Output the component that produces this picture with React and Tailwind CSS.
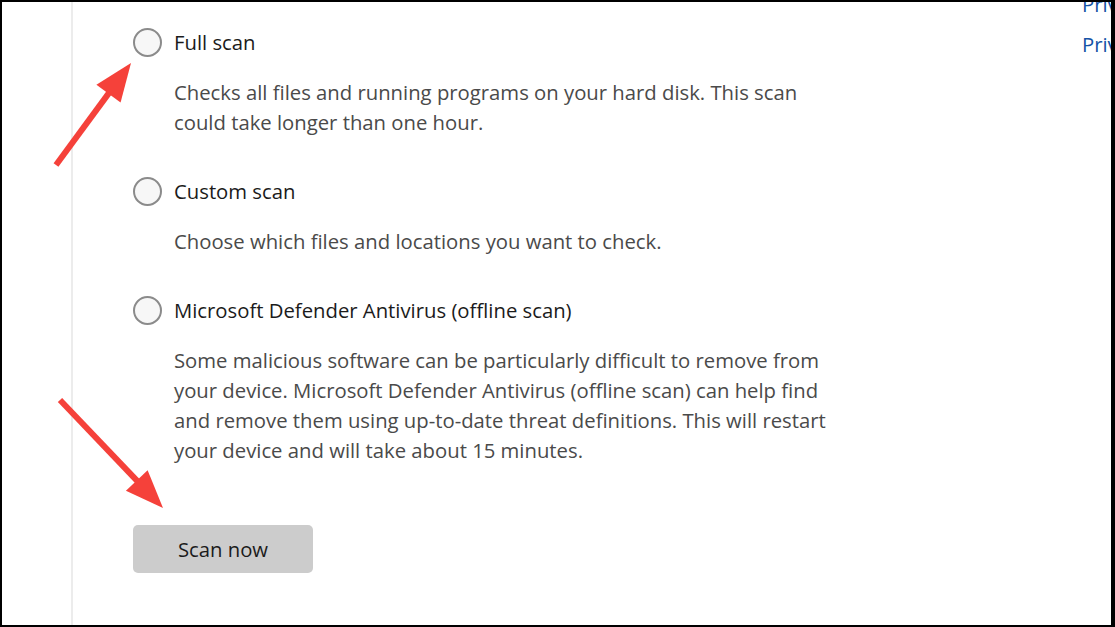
const options = [
  {
    title: "Full scan",
    desc: "Checks all files and running programs on your hard disk. This scan could take longer than one hour."
  },
  {
    title: "Custom scan",
    desc: "Choose which files and locations you want to check."
  },
  {
    title: "Microsoft Defender Antivirus (offline scan)",
    desc: "Some malicious software can be particularly difficult to remove from your device. Microsoft Defender Antivirus (offline scan) can help find and remove them using up-to-date threat definitions. This will restart your device and will take about 15 minutes."
  }
];

const Arrow = ({ x1, y1, x2, y2 }) => {
  // shaft stops short of the tip, head drawn as a triangle
  const dx = x2 - x1;
  const dy = y2 - y1;
  const len = Math.sqrt(dx * dx + dy * dy);
  const ux = dx / len;
  const uy = dy / len;
  const headLen = 38;
  const headW = 15;
  const bx = x2 - ux * headLen;
  const by = y2 - uy * headLen;
  const pts = `${x2},${y2} ${bx - uy * headW},${by + ux * headW} ${bx + uy * headW},${by - ux * headW}`;
  return (
    <g>
      <line x1={x1} y1={y1} x2={bx + ux * 4} y2={by + uy * 4} stroke="#f5413a" strokeWidth="6" />
      <polygon points={pts} fill="#f5413a" />
    </g>
  );
};

const App = () => {
  return (
    <div
      className="relative w-[1115px] h-[627px] overflow-hidden bg-white border-t-2 border-l-2 border-b-2 border-r-4 border-black flex"
      style={{ fontFamily: "'Open Sans', 'Noto Sans', sans-serif" }}
    >
      {/* LEFT GUTTER */}
      <div className="w-[69px] shrink-0" />

      <div className="w-[2px] shrink-0 bg-[#ececec]" />

      {/* OPTIONS */}
      <div className="flex-1 pl-[60px] pt-[25px]">
        {options.map((o, i) => (
          <div key={i} className={i > 0 ? "mt-[39px]" : ""}>
            <div className="flex items-center gap-[12px] h-[30px]">
              <div className="w-[29px] h-[29px] rounded-full border-2 border-[#8b8b8b] bg-[#f7f7f7]" />
              <span className="text-[20.3px] text-[#1b1b1b] leading-[30px]">{o.title}</span>
            </div>
            <p className="mt-[20px] ml-[41px] w-[665px] text-[20.3px] leading-[30px] text-[#4a4a4a]">
              {o.desc}
            </p>
          </div>
        ))}

        <button className="mt-[60px] w-[180px] h-[48px] rounded-[5px] bg-[#cccccc] text-[20.3px] text-[#1b1b1b]">
          Scan now
        </button>
      </div>

      {/* RIGHT LINKS (clipped) */}
      <div className="w-[29px] shrink-0 overflow-hidden -mt-[18px]">
        <div className="text-[20.3px] leading-[40px] text-[#1553a6] whitespace-nowrap">Privacy settings</div>
        <div className="text-[20.3px] leading-[40px] text-[#1553a6] whitespace-nowrap">Privacy dashboard</div>
      </div>

      {/* ANNOTATION ARROWS */}
      <svg className="absolute left-[-2px] top-[-2px] pointer-events-none" width="1115" height="627">
        <Arrow x1={56} y1={165} x2={131} y2={63} />
        <Arrow x1={60} y1={400} x2={163} y2={508} />
      </svg>
    </div>
  );
};

export default App;
